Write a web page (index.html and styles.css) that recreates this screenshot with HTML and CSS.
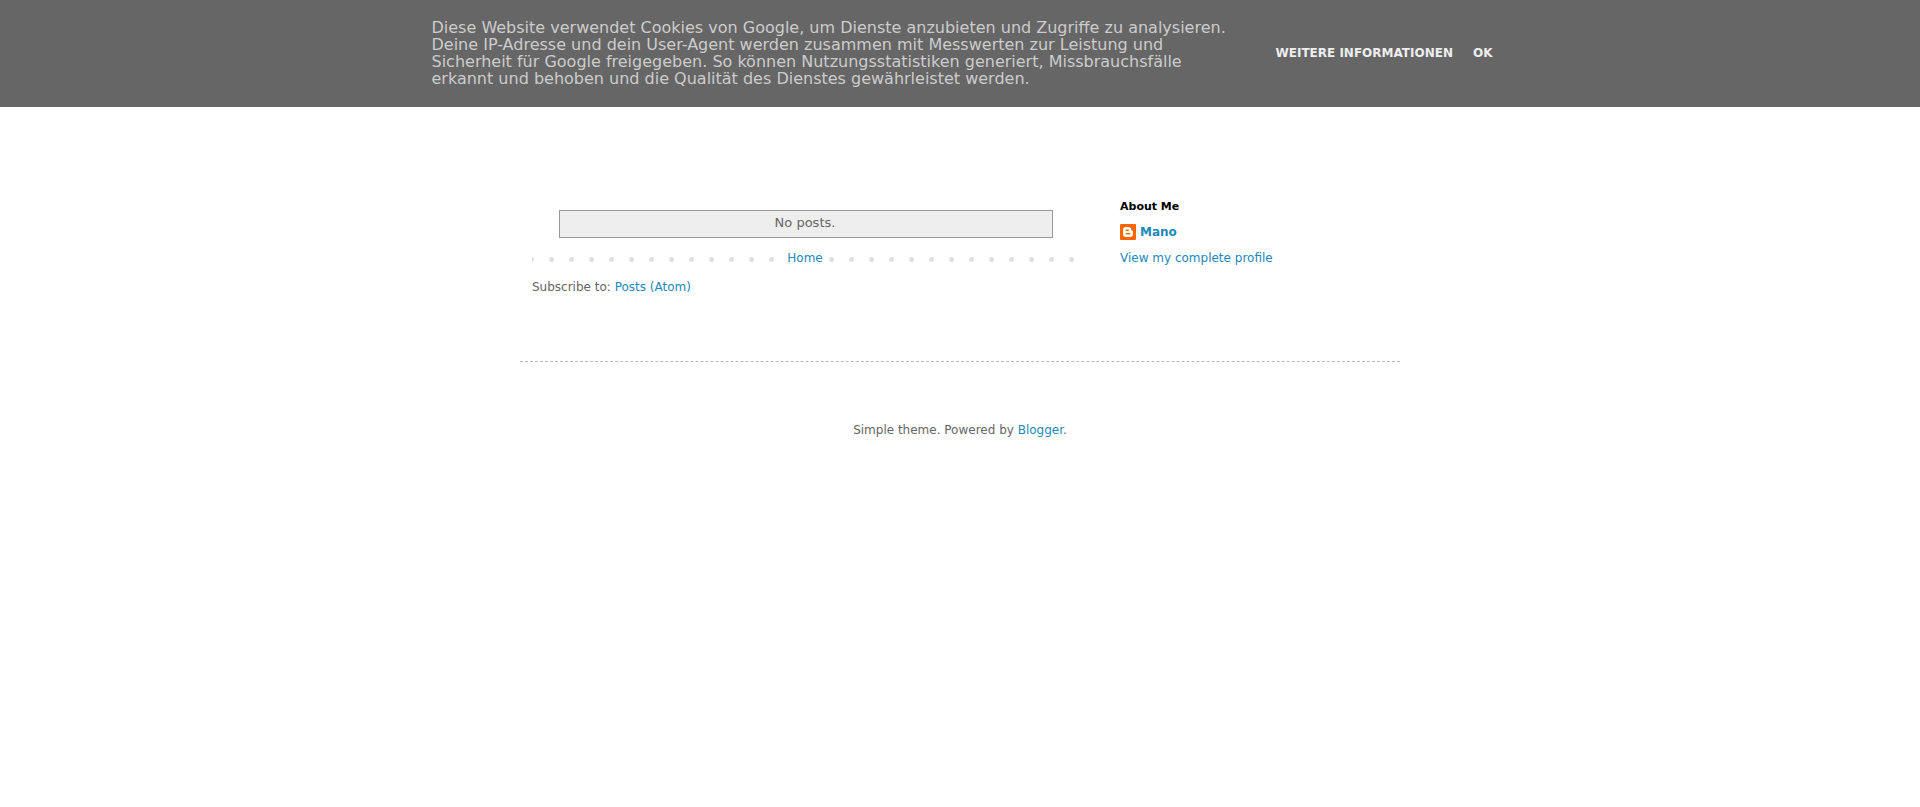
FILE: index.html
```html
<!DOCTYPE html>
<html lang="en">

<head>
    <meta charset="UTF-8" />
    <meta name="viewport" content="width=device-width, initial-scale=1.0" />
    <title>Mano</title>
    <link rel="stylesheet" href="styles.css">
</head>

<body>
    <div class="cookie-bar" lang="de">
        <div class="cookie-inner">
            <p class="cookie-text">Diese Website verwendet Cookies von Google, um Dienste anzubieten und Zugriffe zu analysieren. Deine IP-Adresse und dein User-Agent werden zusammen mit Messwerten zur Leistung und Sicherheit für Google freigegeben. So können Nutzungsstatistiken generiert, Missbrauchsfälle erkannt und behoben und die Qualität des Dienstes gewährleistet werden.</p>
            <div class="cookie-buttons">
                <a href="#">Weitere Informationen</a>
                <a href="#">Ok</a>
            </div>
        </div>
    </div>

    <div class="content">
        <div class="columns">
            <main class="main">
                <div class="status-msg">No posts.</div>
                <nav class="blog-pager">
                    <a href="#">Home</a>
                </nav>
                <div class="feed-links">
                    Subscribe to: <a href="#">Posts (Atom)</a>
                </div>
            </main>

            <aside class="sidebar">
                <h2>About Me</h2>
                <a class="profile-name" href="#">
                    <svg width="16" height="16" viewBox="0 0 16 16" aria-hidden="true">
                        <rect width="16" height="16" rx="1" fill="#ff6600" />
                        <path fill="#fff" fill-rule="evenodd" d="M6 3h2.500C10.200 3 11.300 4.100 11.300 5.700c0 .7.300 1.100.9 1.100.5 0 .8.300.8.800V10c0 1.800-1.200 3-3 3H6c-1.800 0-3-1.200-3-3V6c0-1.800 1.200-3 3-3zM6.200 5.600a.7.700 0 0 0 0 1.400h2a.7.700 0 0 0 0-1.400zM6.200 9a.7.700 0 0 0 0 1.400h3.600a.7.700 0 0 0 0-1.400z" />
                    </svg>
                    Mano
                </a>
                <a class="profile-link" href="#">View my complete profile</a>
            </aside>
        </div>

        <footer class="footer">
            Simple theme. Powered by <a href="#">Blogger</a>.
        </footer>
    </div>
</body>

</html>
```

FILE: styles.css
```css
body {
    margin: 0;
    background: #fff;
    color: #666;
    font-family: 'DejaVu Sans', sans-serif;
    font-size: 12px;
    line-height: 17px;
}

a {
    color: #2288bb;
    text-decoration: none;
}

/* cookie notice */
.cookie-bar {
    background: #666;
    color: #ccc;
}

.cookie-inner {
    display: flex;
    align-items: center;
    justify-content: center;
    padding: 19px 12px 20px 16px;
}

.cookie-text {
    flex: 0 1 800px;
    margin: 0;
    font-size: 16px;
}

.cookie-buttons {
    display: flex;
    flex-shrink: 0;
    gap: 20px;
    margin-left: 44px;
}

.cookie-buttons a {
    color: #eee;
    font-weight: bold;
    text-transform: uppercase;
}

/* page */
.content {
    max-width: 880px;
    margin: 0 auto;
    padding-top: 91px;
}

.columns {
    display: flex;
    gap: 42px;
    padding: 0 12px 65px;
    border-bottom: 1px dashed #bbb;
}

.main {
    flex: 1;
    padding-top: 12px;
}

.status-msg {
    margin: 0 25px 0 27px;
    padding: 3px 12px 6px 10px;
    border: 1px solid #999;
    background: #eee;
    font-size: 13px;
    text-align: center;
}

.blog-pager {
    margin-top: 12px;
    background: radial-gradient(circle at 48% 50%, #e0e0e0 2px, transparent 3px) -10px 0 / 20px 19px repeat-x;
    text-align: center;
}

.blog-pager a {
    display: inline-block;
    padding: 0 6px;
    background: #fff;
}

.feed-links {
    margin-top: 12px;
}

.sidebar {
    width: 268px;
}

.sidebar h2 {
    margin: 0 0 9px;
    color: #000;
    font-size: 11px;
    line-height: 17px;
}

.profile-name {
    display: flex;
    align-items: flex-start;
    gap: 4px;
    margin-bottom: 9px;
    font-weight: bold;
}

.profile-link {
    display: block;
}

.footer {
    padding: 60px 12px;
    text-align: center;
}
```
